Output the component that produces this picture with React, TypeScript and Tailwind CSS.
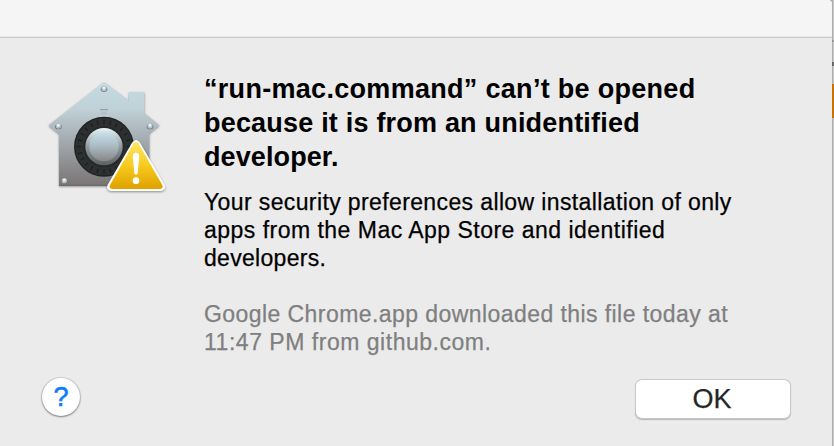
function GatekeeperIcon() {
  const ticks = Array.from({ length: 24 }, (_, i) => i * 15);
  return (
    <svg width="135" height="130" viewBox="0 0 405 390" aria-label="Security warning">
      <defs>
        <linearGradient id="house" x1="0" y1="0" x2="0" y2="1">
          <stop offset="0" stopColor="#c4dbe2" />
          <stop offset="0.25" stopColor="#c0d2d8" />
          <stop offset="0.55" stopColor="#a5adb1" />
          <stop offset="1" stopColor="#797474" />
        </linearGradient>
        <linearGradient id="rim" x1="0" y1="0" x2="0" y2="1">
          <stop offset="0" stopColor="#e9f4f7" />
          <stop offset="0.5" stopColor="#8f9a9f" />
          <stop offset="1" stopColor="#5c6062" />
        </linearGradient>
        <linearGradient id="knob" x1="0" y1="0" x2="0" y2="1">
          <stop offset="0" stopColor="#c6e1eb" />
          <stop offset="0.5" stopColor="#a9b9c0" />
          <stop offset="1" stopColor="#858687" />
        </linearGradient>
        <linearGradient id="warn" x1="0" y1="0" x2="0" y2="1">
          <stop offset="0" stopColor="#ffe766" />
          <stop offset="0.5" stopColor="#f7cb1f" />
          <stop offset="1" stopColor="#dfa100" />
        </linearGradient>
        <filter id="soft" x="-10%" y="-10%" width="120%" height="125%" colorInterpolationFilters="sRGB">
          <feDropShadow dx="0" dy="3" stdDeviation="3" floodColor="#000" floodOpacity="0.4" />
        </filter>
      </defs>
      <path
        d="M192 36 L267 92 V66 H313 V129 L358 166 L328 190 V347 H57 V191 L26 166 Z"
        fill="url(#house)"
        filter="url(#soft)"
      />
      <path d="M57 346 H328" stroke="#5f5b5b" strokeWidth="2" />
      {[[192, 56], [55, 168], [330, 168], [73, 332]].map(([x, y]) => (
        <g key={`${x}-${y}`}>
          <ellipse cx={x} cy={y + 2} rx="10" ry="8" fill="#66757b" />
          <circle cx={x} cy={y} r="8" fill="#b4c1c6" />
          <circle cx={x} cy={y - 2} r="4" fill="#f3f7f8" />
        </g>
      ))}
      <path d="M180 119 H204" stroke="#8d9ba1" strokeWidth="3" />
      <path d="M183 124 L188 133 L192 125 L196 133 L201 124" fill="none" stroke="#a3b2b8" strokeWidth="2" />
      <circle cx="192" cy="230" r="90" fill="#1f2222" />
      <circle cx="192" cy="230" r="86" fill="#2d3030" />
      {ticks.map((a) => (
        <path key={a} d="M192 149 V162" stroke="#181a1a" strokeWidth="3" transform={`rotate(${a} 192 230)`} />
      ))}
      <circle cx="192" cy="230" r="62" fill="#262829" />
      <circle cx="192" cy="230" r="56" fill="url(#rim)" />
      <circle cx="192" cy="230" r="44" fill="url(#knob)" />
      <path
        d="M276 218 Q288 202 300 218 L374 344 Q380 360 362 363 H214 Q196 360 203 344 Z"
        fill="#fff"
        filter="url(#soft)"
      />
      <path d="M281 220 Q288 210 295 220 L367 345 Q371 355 360 357 H217 Q206 355 210 345 Z" fill="url(#warn)" />
      <path d="M278 258 Q279 248 288 248 Q297 248 298 258 L293 310 Q288 318 283 310 Z" fill="#fff" />
      <circle cx="288" cy="332" r="10" fill="#fff" />
    </svg>
  );
}

export default function App() {
  return (
    <div className="flex h-[446px] w-[834px] overflow-hidden bg-[#a8a8a8] font-['Liberation_Sans',Arial,sans-serif]">
      <div className="flex w-[832px] shrink-0 flex-col rounded-tr-[4px] bg-[#ebebeb]">
        <div className="h-[38px] shrink-0 rounded-tr-[4px] border-b border-[#cbcbcb] bg-[#f5f5f5]">
          <div className="h-[37px] rounded-tr-[4px] border-b border-[#e6e6e6]" />
        </div>
        <div className="flex grow flex-col">
          <div className="flex h-[340px] whitespace-nowrap">
            <div className="w-[204px] shrink-0 pt-[32px] pl-[40px]">
              <GatekeeperIcon />
            </div>
            <div className="pt-[34px]">
              <h1 className="flex flex-col items-start text-[27px] leading-[34px] font-bold text-black">
                <span className="tracking-[0.3px]">“run-mac.command” can’t be opened</span>
                <span className="tracking-[0.2px]">because it is from an unidentified</span>
                <span className="tracking-[0.1px]">developer.</span>
              </h1>
              <p className="mt-[14px] flex flex-col items-start text-[23px] leading-[28px] text-black [-webkit-text-stroke:0.25px_black]">
                <span className="tracking-[0.38px]">Your security preferences allow installation of only</span>
                <span className="tracking-[0.48px]">apps from the Mac App Store and identified</span>
                <span className="tracking-[0.3px]">developers.</span>
              </p>
              <p className="mt-[28px] flex flex-col items-start text-[23px] leading-[28px] text-[#7f7f7f] [-webkit-text-stroke:0.25px_#7f7f7f]">
                <span className="tracking-[0.43px]">Google Chrome.app downloaded this file today at</span>
                <span className="tracking-[0.52px]">11:47 PM from github.com.</span>
              </p>
            </div>
          </div>
          <div className="flex items-start justify-between pr-[42px] pl-[42px]">
            <button className="flex size-[38px] items-center justify-center rounded-full bg-white pt-px text-[27px] leading-none text-[#0a7cff] shadow-[0_0_1px_1px_rgba(0,0,0,0.12),0_1px_2px_rgba(0,0,0,0.4)] [-webkit-text-stroke:0.6px_#0a7cff]">
              ?
            </button>
            <button className="mt-[2px] flex h-[38px] w-[154px] items-center justify-center rounded-[6px] bg-white pt-px pr-[2px] text-[27px] leading-none text-[#262626] shadow-[0_0_0_1px_#c9c9c9,0_1px_1px_1px_#b5b5b5] [-webkit-text-stroke:0.25px_#262626]">
              OK
            </button>
          </div>
        </div>
      </div>
      <div className="flex w-[2px] flex-col bg-linear-to-r from-[#a0a0a0] to-[#d8d8d8]">
        <div className="mt-[40px] h-[2px] bg-[#999]" />
        <div className="mt-[20px] h-[4px] bg-[#666]" />
        <div className="mt-[18px] h-[34px] bg-[#cb7100]" />
      </div>
    </div>
  );
}
